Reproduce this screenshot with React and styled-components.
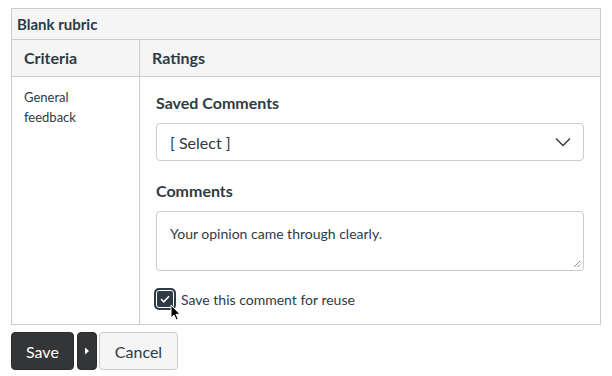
import React from "react";
import styled, { createGlobalStyle } from "styled-components";

const Global = createGlobalStyle`
  body {
    margin: 0;
    background: #fff;
    font-family: Lato, "Liberation Sans", sans-serif;
    color: #2d3b45;
  }
`;

const Page = styled.div`
  padding: 8px 12px 0 11px;
  width: 590px;
`;

const Rubric = styled.div`
  border: 1px solid #c7cdd1;
`;

const Title = styled.div`
  background: #f5f5f5;
  height: 30px;
  padding: 0 5px;
  display: flex;
  align-items: center;
  font-weight: 700;
  font-size: 15px;
  border-bottom: 1px solid #c7cdd1;
`;

const Row = styled.div`
  display: grid;
  grid-template-columns: 127px 1fr;
  background: ${(p) => (p.head ? "#f5f5f5" : "#fff")};
  border-bottom: ${(p) => (p.head ? "1px solid #c7cdd1" : "none")};
`;

const Cell = styled.div`
  padding: ${(p) => (p.head ? "0 12px" : "10px 12px")};
  height: ${(p) => (p.head ? "36px" : "auto")};
  display: flex;
  align-items: ${(p) => (p.head ? "center" : "flex-start")};
  font-weight: ${(p) => (p.head ? 700 : 400)};
  font-size: ${(p) => (p.head ? "16px" : "13px")};
  line-height: 20px;
`;

const Ratings = styled.div`
  padding: 16px 16px 14px 16px;
  display: flex;
  flex-direction: column;
  border-left: 1px solid #c7cdd1;
`;

const HeadRatings = styled(Cell)`
  border-left: 1px solid #c7cdd1;
`;

const Label = styled.div`
  font-weight: 700;
  font-size: 16px;
  line-height: 20px;
  margin-bottom: 10px;
  margin-top: ${(p) => p.gap || 0}px;
`;

const SelectBox = styled.div`
  height: 36px;
  border: 1px solid #c7cdd1;
  border-radius: 4px;
  display: flex;
  align-items: center;
  justify-content: space-between;
  padding: 0 12px 0 13px;
  font-size: 16px;
`;

const TextArea = styled.div`
  position: relative;
  height: 60px;
  border: 1px solid #c7cdd1;
  border-radius: 4px;
  padding: 12px 13px;
  box-sizing: border-box;
  font-size: 14px;
  line-height: 20px;
`;

const Grip = styled.svg`
  position: absolute;
  right: 2px;
  bottom: 2px;
`;

const CheckRow = styled.div`
  position: relative;
  display: flex;
  align-items: center;
  gap: 4px;
  margin-top: 17px;
  margin-left: -3px;
  font-size: 14px;
`;

const Box = styled.span`
  width: 16px;
  height: 16px;
  border-radius: 3px;
  background: #2d3b45;
  display: flex;
  align-items: center;
  justify-content: center;
  border: 1px solid #fff;
  box-shadow: 0 0 0 2px #2d3b45;
  margin: 2px 3px;
`;

const Cursor = styled.svg`
  position: absolute;
  left: 17px;
  top: 16px;
`;

const Buttons = styled.div`
  display: flex;
  margin-top: 7px;
`;

const Btn = styled.button`
  box-sizing: border-box;
  height: 38px;
  padding: 0 ${(p) => p.pad}px;
  width: ${(p) => (p.narrow ? "20px" : "auto")};
  border-radius: 4px;
  font-family: inherit;
  font-size: 16px;
  border: 1px solid ${(p) => (p.dark ? "#2d2d2d" : "#c7cdd1")};
  background: ${(p) => (p.dark ? "#333536" : "#f5f5f5")};
  color: ${(p) => (p.dark ? "#fff" : "#2d3b45")};
  display: flex;
  align-items: center;
  justify-content: center;
  margin-right: ${(p) => p.mr || 0}px;
`;

export default function App() {
  return (
    <Page>
      <Global />
      <Rubric>
        <Title>Blank rubric</Title>
        <Row head>
          <Cell head>Criteria</Cell>
          <HeadRatings head>Ratings</HeadRatings>
        </Row>
        <Row>
          <Cell>General<br />feedback</Cell>
          <Ratings>
            <Label>Saved Comments</Label>
            <SelectBox>
              <span>[ Select ]</span>
              <svg width="16" height="10" viewBox="0 0 16 10">
                <path d="M1 1.5l7 7 7-7" fill="none" stroke="#2d3b45" strokeWidth="1.4" />
              </svg>
            </SelectBox>
            <Label gap={20}>Comments</Label>
            <TextArea>
              Your opinion came through clearly.
              <Grip width="8" height="8" viewBox="0 0 8 8">
                <path d="M7 1L1 7M7 4.5L4.5 7" stroke="#888" strokeWidth="1" />
              </Grip>
            </TextArea>
            <CheckRow>
              <Box>
                <svg width="10" height="8" viewBox="0 0 10 8">
                  <path d="M1 4l2.8 2.8L9 1.2" fill="none" stroke="#fff" strokeWidth="1.6" />
                </svg>
              </Box>
              <span>Save this comment for reuse</span>
              <Cursor width="12" height="18" viewBox="0 0 12 18">
                <path d="M1 1v13l3-3 2.2 5 2-0.9-2.1-4.8H10z" fill="#000" stroke="#fff" strokeWidth="1" />
              </Cursor>
            </CheckRow>
          </Ratings>
        </Row>
      </Rubric>
      <Buttons>
        <Btn dark pad={14} mr={3}>Save</Btn>
        <Btn dark narrow pad={0} mr={2}>
          <svg width="6" height="8" viewBox="0 0 6 8">
            <path d="M1 0.5L5 4 1 7.5z" fill="#fff" />
          </svg>
        </Btn>
        <Btn pad={15}>Cancel</Btn>
      </Buttons>
    </Page>
  );
}
